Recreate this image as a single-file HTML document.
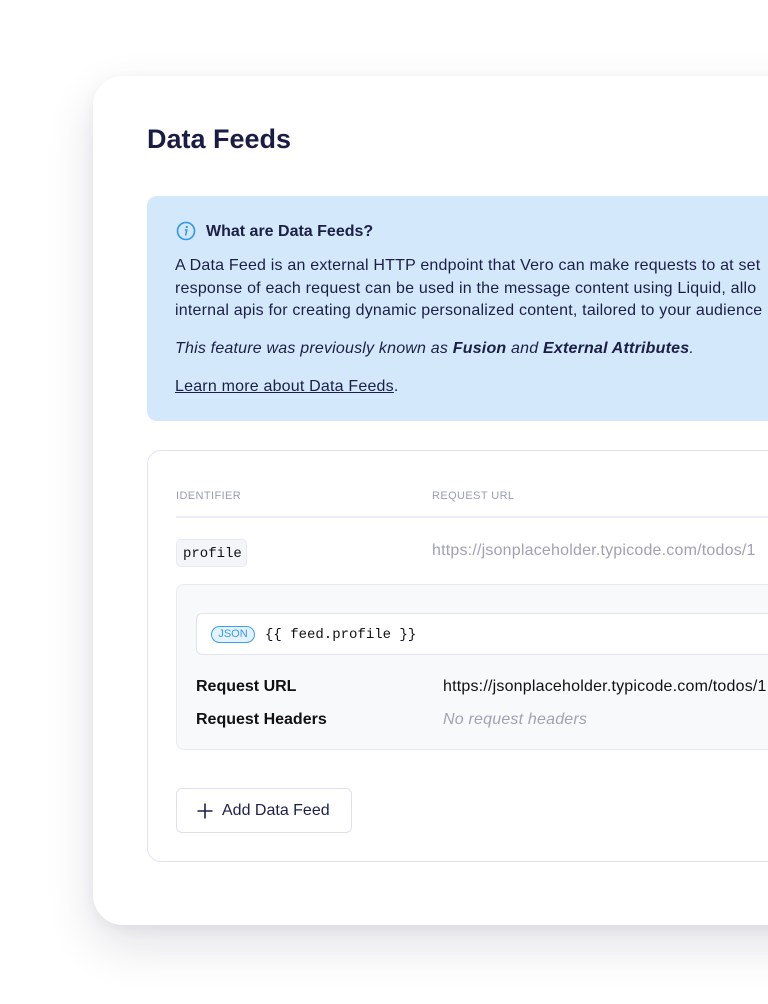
<!DOCTYPE html>
<html><head><style>
*{box-sizing:border-box;margin:0;padding:0}
body{width:768px;height:1004px;overflow:hidden;background:#fff;font-family:"Liberation Sans",sans-serif;position:relative}
.card{position:absolute;left:93px;top:76px;width:760px;height:849px;background:#fff;border-radius:30px;box-shadow:0 20px 50px rgba(20,20,50,0.12),0 4px 14px rgba(20,20,50,0.05)}
h1{position:absolute;left:147px;top:124px;font-size:27px;font-weight:bold;color:#1a1c45;letter-spacing:0}
.info{position:absolute;left:147px;top:196px;width:700px;height:225px;background:#d3e8fb;border-radius:10px;color:#1c1f45;font-size:16px}
.info .t{position:absolute;left:59px;top:27px;font-weight:bold}
.info .ic{position:absolute;left:29px;top:25px}
.info p{position:absolute;left:28px;white-space:nowrap;line-height:22.5px;letter-spacing:0.2px}
.tbl{position:absolute;left:147px;top:450px;width:700px;height:412px;border:1.5px solid #e2e3f0;border-radius:14px}
.hd{position:absolute;top:490px;font-size:11px;color:#9b9db2;letter-spacing:0.4px}
.line{position:absolute;left:176px;top:516px;width:600px;height:2px;background:#eeeff6}
.chip{position:absolute;left:176px;top:539px;width:71px;height:28px;background:#f4f5f8;border:1px solid #e9eaf0;border-radius:5px;font-family:"Liberation Mono",monospace;font-size:14px;color:#111;padding:6px 0 0 6px}
.gurl{position:absolute;left:432px;top:542px;font-size:16px;color:#a0a2b4;white-space:nowrap;letter-spacing:0.2px}
.panel{position:absolute;left:176px;top:584px;width:620px;height:166px;background:#f8f9fb;border:1.5px solid #e9eaf1;border-radius:8px}
.inp{position:absolute;left:196px;top:613px;width:600px;height:42px;background:#fff;border:1.5px solid #e2e3ee;border-radius:6px}
.json{position:absolute;left:211px;top:626px;width:44px;height:17px;border:1.5px solid #3aa0f0;border-radius:9px;background:#e4f2fe;color:#3a9ae8;font-size:11px;text-align:center;line-height:14px}
.code{position:absolute;left:265px;top:627px;font-family:"Liberation Mono",monospace;font-size:14px;color:#111;white-space:nowrap}
.lab{position:absolute;left:196px;font-size:16px;font-weight:bold;color:#111}
.val{position:absolute;left:443px;font-size:16px;color:#111;white-space:nowrap;letter-spacing:0.2px}
.btn{position:absolute;left:176px;top:788px;width:176px;height:45px;border:1.5px solid #dfe0ef;border-radius:6px;background:#fff;color:#1c1f4d;font-size:16px}
</style></head><body>
<div class="card"></div>
<h1>Data Feeds</h1>
<div class="info">
<svg class="ic" width="20" height="20" viewBox="0 0 20 20"><circle cx="10" cy="10" r="8.5" fill="none" stroke="#2f95ef" stroke-width="1.6"/><circle cx="10.8" cy="6" r="1.1" fill="#2f95ef"/><path d="M9.4 9h1.4l-1.1 5" stroke="#2f95ef" stroke-width="1.5" fill="none" stroke-linecap="round"/></svg>
<div class="t">What are Data Feeds?</div>
<p style="top:59px">A Data Feed is an external HTTP endpoint that Vero can make requests to at set<br>response of each request can be used in the message content using Liquid, allo<br>internal apis for creating dynamic personalized content, tailored to your audience</p>
<p style="top:142px;font-style:italic">This feature was previously known as <b>Fusion</b> and <b>External Attributes</b>.</p>
<p style="top:180px"><span style="text-decoration:underline">Learn more about Data Feeds</span>.</p>
</div>
<div class="tbl"></div>
<div class="hd" style="left:176px">IDENTIFIER</div>
<div class="hd" style="left:432px">REQUEST URL</div>
<div class="line"></div>
<div class="chip">profile</div>
<div class="gurl">https://jsonplaceholder.typicode.com/todos/1</div>
<div class="panel"></div>
<div class="inp"></div>
<div class="json">JSON</div>
<div class="code">{{ feed.profile }}</div>
<div class="lab" style="top:678px">Request URL</div>
<div class="lab" style="top:711px">Request Headers</div>
<div class="val" style="top:678px">https://jsonplaceholder.typicode.com/todos/1</div>
<div class="val" style="top:711px;font-style:italic;color:#a0a2b4">No request headers</div>
<div class="btn"><svg style="position:absolute;left:20px;top:14px" width="16" height="16" viewBox="0 0 16 16"><path d="M8 0.5v15M0.5 8h15" stroke="#1c1f4d" stroke-width="1.6"/></svg><span style="position:absolute;left:45px;top:13px">Add Data Feed</span></div>
</body></html>
